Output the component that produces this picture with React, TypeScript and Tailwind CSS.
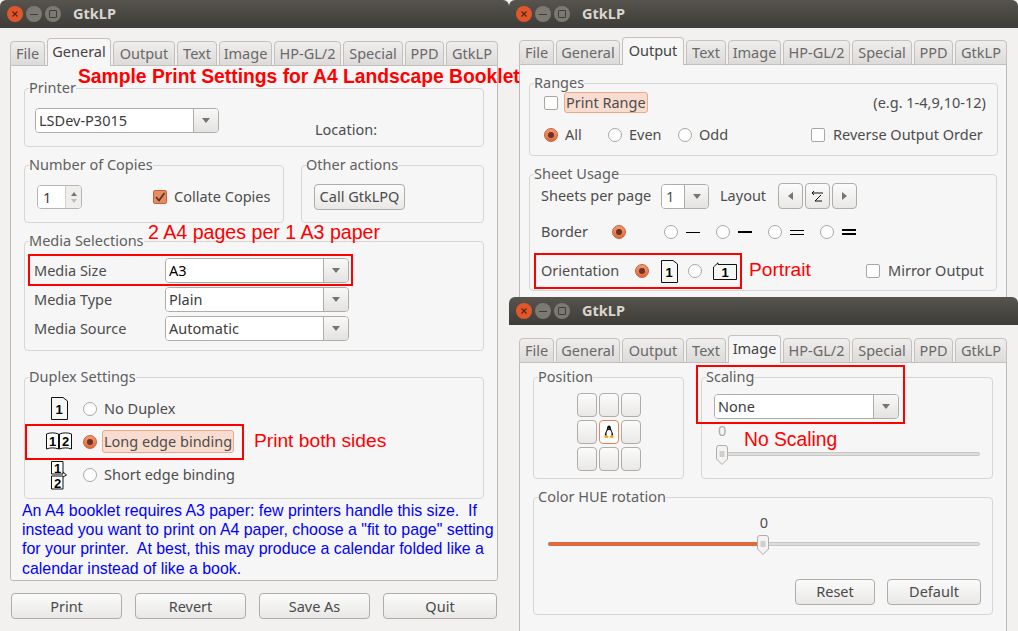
import type { ReactNode } from 'react';

const TAB_WIDTHS: Array<[string, string]> = [
  ['File', 'w-[35px]'],
  ['General', 'w-[64px]'],
  ['Output', 'w-[62px]'],
  ['Text', 'w-[40px]'],
  ['Image', 'w-[53px]'],
  ['HP-GL/2', 'w-[67px]'],
  ['Special', 'w-[60px]'],
  ['PPD', 'w-[39px]'],
  ['GtkLP', 'w-[52px]'],
];

function TitleBar() {
  return <div className="flex h-[28px] items-center rounded-t-[6px] bg-gradient-to-b from-[#57544e] to-[#3d3c37] pl-[7px]">
    <span className="flex h-[16px] w-[16px] items-center justify-center rounded-full bg-[#e2562b]">
      <svg width="8" height="8" viewBox="0 0 8 8"><path d="M1.500 1.500l5 5M6.500 1.500l-5 5" stroke="#5a2413" strokeWidth="1.200" /></svg>
    </span>
    <span className="ml-[3px] flex h-[16px] w-[16px] items-center justify-center rounded-full bg-[#7b7972]">
      <span className="h-[1px] w-[8px] bg-[#3e3c38]" />
    </span>
    <span className="ml-[3px] flex h-[16px] w-[16px] items-center justify-center rounded-full bg-[#7b7972]">
      <span className="h-[8px] w-[8px] rounded-[1px] border border-[#3e3c38]" />
    </span>
    <span className="ml-[12px] text-[14.5px] font-bold text-[#d9d6cf]">GtkLP</span>
  </div>;
}

function Tabs({ active }: { active: string }) {
  return <div className="relative z-10 -mb-[1px] flex h-[28px] items-end gap-[2px]">
    {TAB_WIDTHS.map(([name, width]) => name === active
      ? <div key={name} className={`${width} flex h-[28px] items-center justify-center rounded-t-[4px] border border-b-0 border-[#c4c1bd] bg-[#f6f6f6] pb-[2px] text-[#444]`}>{name}</div>
      : <div key={name} className={`${width} flex h-[25px] items-center justify-center rounded-t-[4px] border border-[#c4c1bd] bg-gradient-to-b from-[#efeeed] to-[#dddbd9] text-[#696969]`}>{name}</div>)}
  </div>;
}

function Group({ title, className, inner, children }: { title: string; className: string; inner?: string; children: ReactNode }) {
  return <fieldset className={`rounded-[4px] border border-[#d8d6d3] ${className}`}>
    <legend className="ml-[4px] text-[14.5px] leading-[20px] text-[#5f5f5f]"><span className="relative -top-[1px]">{title}</span></legend>
    <div className={inner}>{children}</div>
  </fieldset>;
}

function Combo({ value, className, dark }: { value: string; className: string; dark?: boolean }) {
  return <div className={`flex h-[25px] overflow-hidden rounded-[4px] border border-[#b0aca8] ${className}`}>
    <div className={`min-w-0 flex-1 bg-white pl-[3px] leading-[23px] ${dark ? 'text-black' : 'text-[#3c3c3c]'}`}>{value}</div>
    <div className="flex w-[25px] items-center justify-center border-l border-[#b0aca8] bg-gradient-to-b from-[#f8f8f8] to-[#e4e3e1]">
      <span className="h-0 w-0 border-x-[4px] border-t-[5px] border-x-transparent border-t-[#77736e]" />
    </div>
  </div>;
}

function Radio({ on }: { on?: boolean }) {
  return on
    ? <span className="flex h-[14px] w-[14px] shrink-0 items-center justify-center rounded-full border border-[#c9603a] bg-gradient-to-b from-[#f09a75] to-[#e0683c]"><span className="h-[6px] w-[6px] rounded-full bg-[#6b3322]" /></span>
    : <span className="block h-[14px] w-[14px] shrink-0 rounded-full border border-[#aaa7a3] bg-white" />;
}

function Check({ on }: { on?: boolean }) {
  return on
    ? <span className="flex h-[14px] w-[14px] shrink-0 items-center justify-center rounded-[2px] border border-[#c9603a] bg-[#ea8a62]">
      <svg width="12" height="12" viewBox="0 0 12 12"><path d="M2 6l3 3.500L10.500 2" fill="none" stroke="#4d3a30" strokeWidth="1.800" /></svg>
    </span>
    : <span className="block h-[14px] w-[14px] shrink-0 rounded-[2px] border border-[#aaa7a3] bg-white" />;
}

function Button({ className, children }: { className: string; children?: ReactNode }) {
  return <div className={`flex items-center justify-center rounded-[4px] border border-[#b0aca8] bg-gradient-to-b from-[#fbfbfb] to-[#e9e8e6] text-[#4a4a4a] ${className}`}>{children}</div>;
}

function Page({ n, landscape }: { n: string; landscape?: boolean }) {
  return landscape
    ? <svg width="24" height="18" viewBox="0 0 24 18" className="block shrink-0">
      <path d="M.5 5L5 .8V2.500h18.500v15H.5z" fill="#f4f7f4" stroke="#111" />
      <text x="12" y="15" fontSize="13" fontWeight="700" textAnchor="middle" fontFamily="Liberation Sans" fill="#000">{n}</text>
    </svg>
    : <svg width="17" height="23" viewBox="0 0 17 23" className="block shrink-0">
      <path d="M.5 .5H12L16.500 4V22.500H.5z" fill="#f4f7f4" stroke="#111" />
      <text x="8" y="17" fontSize="13" fontWeight="700" textAnchor="middle" fontFamily="Liberation Sans" fill="#000">{n}</text>
    </svg>;
}

function LongBinding() {
  return <svg width="28" height="20" viewBox="0 0 28 20" className="shrink-0">
    <path d="M1.500 17V2C5 .5 10 .5 13.500 2V17C10 15.500 5 15.500 1.500 17zM14.500 17V2C18 .5 23 .5 26.500 2V17C23 15.500 18 15.500 14.500 17z" fill="#fff" stroke="#111" />
    <text x="7.500" y="14" fontSize="13" fontWeight="700" textAnchor="middle" fontFamily="Liberation Sans" fill="#000">1</text>
    <text x="20.500" y="14" fontSize="13" fontWeight="700" textAnchor="middle" fontFamily="Liberation Sans" fill="#000">2</text>
  </svg>;
}

function ShortBinding() {
  return <svg width="18" height="30" viewBox="0 0 18 30" className="shrink-0">
    <path d="M1.500 1.500H13V14H1.500zM1.500 16H13V29H1.500z" fill="#fff" stroke="#111" />
    <path d="M13 12l3.500 3-3.500 2" fill="none" stroke="#111" />
    <text x="7.500" y="12.500" fontSize="13" fontWeight="700" textAnchor="middle" fontFamily="Liberation Sans" fill="#000">1</text>
    <text x="7.500" y="27.500" fontSize="13" fontWeight="700" textAnchor="middle" fontFamily="Liberation Sans" fill="#000">2</text>
  </svg>;
}

function Tux() {
  return <svg width="12" height="14" viewBox="0 0 12 14">
    <path d="M6 .5C4.500 .5 4 2 4 3.500 4 5 2 7 1.800 10L4 12h4l2.200-2C10 7 8 5 8 3.500 8 2 7.500 .5 6 .5z" fill="#111" />
    <ellipse cx="6" cy="8.500" rx="2.500" ry="3.500" fill="#fff" />
    <path d="M1 11l3-1 1 3H2zM11 11l-3-1-1 3h3z" fill="#f2b01e" />
    <path d="M5.200 3.500h1.600L6 4.500z" fill="#f2b01e" />
  </svg>;
}

function Slider({ value, className, fill }: { value: number; className: string; fill?: boolean }) {
  return <div className={`relative h-[20px] ${className}`}>
    <div className="absolute inset-x-0 top-[7px] h-[4px] rounded-full border border-[#c8c6c3] bg-[#dfdedc]" />
    {fill && <div className="absolute left-0 top-[7px] h-[4px] rounded-full bg-[#e0693d]" style={{ width: value + 3 }} />}
    <svg width="12" height="20" viewBox="0 0 12 20" className="absolute top-0" style={{ left: value - 3 }}>
      <path d="M.5 3Q.5 .5 3 .5H9Q11.500 .5 11.500 3V14L6 19.500.5 14z" fill="#f4f3f2" stroke="#b0aca8" />
      <path d="M3.500 7h5M3.500 9h5M3.500 11h5" stroke="#aaa" />
    </svg>
  </div>;
}

function Annotation({ className, children }: { className: string; children: ReactNode }) {
  return <div className={`absolute z-30 whitespace-nowrap font-['Liberation_Sans',sans-serif] text-[#ff0000] ${className}`}>{children}</div>;
}

function GeneralWindow() {
  return <section className="absolute left-0 top-0 z-0 h-[631px] w-[509px] overflow-hidden bg-[#f2f1f0]">
    <TitleBar />
    <div className="pl-[10px] pr-[11px] pt-[10px]">
      <Tabs active="General" />
      <div className="h-[516px] rounded-b-[3px] border border-[#bdbab6] bg-[#f6f6f6] px-[13px] pt-[12px]">
        <Group title="Printer" className="h-[69px]" inner="pl-[10px] pt-[10px]">
          <div className="flex items-start">
            <Combo value="LSDev-P3015" className="w-[184px]" />
            <span className="ml-[96px] mt-[11px] text-[#4d4d4d]">Location:</span>
          </div>
        </Group>
        <div className="mt-[8px] flex gap-[17px]">
          <Group title="Number of Copies" className="h-[68px] w-[260px]" inner="pl-[12px] pt-[10px]">
            <div className="flex items-center">
              <div className="flex h-[24px] w-[45px] overflow-hidden rounded-[4px] border border-[#b8b5b1]">
                <div className="flex-1 bg-white pl-[5px] leading-[22px] text-[#3c3c3c]">1</div>
                <div className="flex w-[16px] flex-col items-center justify-center gap-[3px] border-l border-[#d2d0cd] bg-[#efeeed]">
                  <span className="h-0 w-0 border-x-[3px] border-b-[4px] border-x-transparent border-b-[#77736e]" />
                  <span className="h-0 w-0 border-x-[3px] border-t-[4px] border-x-transparent border-t-[#c0bdb9]" />
                </div>
              </div>
              <span className="ml-[71px]"><Check on /></span>
              <span className="ml-[7px] text-[#4d4d4d]">Collate Copies</span>
            </div>
          </Group>
          <Group title="Other actions" className="h-[68px] w-[183px]" inner="pl-[12px] pt-[9px]">
            <Button className="h-[26px] w-[91px] text-[#3c3c3c]">Call GtkLPQ</Button>
          </Group>
        </div>
        <Group title="Media Selections" className="mt-[8px] h-[120px]" inner="pl-[9px] pt-[7px]">
          <div className="flex flex-col gap-[4px]">
            {[['Media Size', 'A3'], ['Media Type', 'Plain'], ['Media Source', 'Automatic']].map(([label, value]) => <div key={label} className="flex items-center">
              <span className="w-[131px] text-[#4d4d4d]">{label}</span>
              <Combo value={value} dark={value === 'A3'} className="w-[184px]" />
            </div>)}
          </div>
        </Group>
        <Group title="Duplex Settings" className="mt-[16px] h-[132px]" inner="pl-[10px] pt-[5px]">
          <div className="flex h-[33px] items-center">
            <span className="flex w-[48px] justify-center"><Page n="1" /></span>
            <Radio />
            <span className="ml-[7px] text-[#4d4d4d]">No Duplex</span>
          </div>
          <div className="flex h-[33px] items-center">
            <span className="flex w-[48px] justify-center"><LongBinding /></span>
            <Radio on />
            <span className="ml-[5px] rounded-[3px] border border-[#f0a688] bg-[#f8dccf] px-[1px] text-[#4d4d4d]">Long edge binding</span>
          </div>
          <div className="flex h-[33px] items-center">
            <span className="flex w-[48px] justify-center"><ShortBinding /></span>
            <Radio />
            <span className="ml-[7px] text-[#4d4d4d]">Short edge binding</span>
          </div>
        </Group>
        <p className="-ml-[2px] mt-[2px] whitespace-pre font-['Liberation_Sans',sans-serif] text-[15.9px] leading-[19.2px] text-[#0000ff]">{'An A4 booklet requires A3 paper: few printers handle this size.  If\ninstead you want to print on A4 paper, choose a "fit to page" setting\nfor your printer.  At best, this may produce a calendar folded like a\ncalendar instead of like a book.'}</p>
      </div>
      <div className="ml-[1px] mt-[12px] flex gap-[13px]">
        <Button className="h-[26px] w-[111px] pt-[1px]">Print</Button>
        <Button className="h-[26px] w-[111px] pt-[1px]">Revert</Button>
        <Button className="h-[26px] w-[111px] pt-[1px]">Save As</Button>
        <Button className="h-[26px] w-[114px] pt-[1px]">Quit</Button>
      </div>
    </div>
  </section>;
}

function OutputWindow() {
  return <section className="absolute left-[509px] top-0 z-10 h-[297px] w-[509px] overflow-hidden bg-[#f2f1f0]">
    <TitleBar />
    <div className="pl-[10px] pr-[11px] pt-[9px]">
      <Tabs active="Output" />
      <div className="h-[300px] border border-[#bdbab6] bg-[#f6f6f6] px-[9px] pt-[8px]">
        <Group title="Ranges" className="h-[83px]" inner="px-[14px]">
          <div className="-mt-[1px] flex h-[21px] items-center">
            <Check />
            <span className="ml-[6px] rounded-[3px] border border-[#f0a688] bg-[#f8dccf] px-[1px] leading-[19px] text-[#4d4d4d]">Print Range</span>
            <span className="ml-auto mr-[-3px] whitespace-nowrap text-[#4d4d4d]">(e.g. 1-4,9,10-12)</span>
          </div>
          <div className="mt-[12px] flex h-[20px] items-center whitespace-nowrap text-[#4d4d4d]">
            <span className="flex w-[64px] items-center gap-[7px]"><Radio on />All</span>
            <span className="flex w-[70px] items-center gap-[7px]"><Radio />Even</span>
            <span className="flex w-[133px] items-center gap-[7px]"><Radio />Odd</span>
            <span className="flex items-center gap-[8px]"><Check />Reverse Output Order</span>
          </div>
        </Group>
        <Group title="Sheet Usage" className="mt-[8px] h-[127px]" inner="pl-[11px]">
          <div className="-mt-[1px] flex h-[26px] items-center text-[#4d4d4d]">
            <span className="w-[120px]">Sheets per page</span>
            <div className="flex h-[25px] w-[48px] overflow-hidden rounded-[4px] border border-[#b0aca8]">
              <div className="w-[22px] bg-white pl-[4px] leading-[23px]">1</div>
              <div className="flex flex-1 items-center justify-center border-l border-[#b0aca8] bg-gradient-to-b from-[#f8f8f8] to-[#e4e3e1]">
                <span className="h-0 w-0 border-x-[4px] border-t-[5px] border-x-transparent border-t-[#77736e]" />
              </div>
            </div>
            <span className="ml-[11px] w-[58px]">Layout</span>
            <div className="flex gap-[2px]">
              <Button className="h-[26px] w-[25px]"><span className="h-0 w-0 border-y-[4px] border-r-[5px] border-y-transparent border-r-[#77736e]" /></Button>
              <Button className="h-[26px] w-[25px]">
                <svg width="13" height="13" viewBox="0 0 13 13"><path d="M1 3h11M1 3l2-2M1 3l2 2M10 5L4 11h7" fill="none" stroke="#111" /></svg>
              </Button>
              <Button className="h-[26px] w-[25px]"><span className="h-0 w-0 border-y-[4px] border-l-[5px] border-y-transparent border-l-[#77736e]" /></Button>
            </div>
          </div>
          <div className="mt-[13px] flex h-[20px] items-center text-[#4d4d4d]">
            <span className="w-[71px]">Border</span>
            <span className="w-[52px]"><Radio on /></span>
            <span className="flex w-[52px] items-center gap-[8px]"><Radio /><span className="h-[1px] w-[14px] bg-black" /></span>
            <span className="flex w-[52px] items-center gap-[8px]"><Radio /><span className="h-[2px] w-[14px] bg-black" /></span>
            <span className="flex w-[52px] items-center gap-[8px]"><Radio /><span className="h-[5px] w-[14px] border-y border-black" /></span>
            <span className="flex w-[52px] items-center gap-[8px]"><Radio /><span className="h-[6px] w-[14px] border-y-2 border-black" /></span>
          </div>
          <div className="mt-[19px] flex h-[20px] items-center whitespace-nowrap text-[#4d4d4d]">
            <span className="w-[94px]">Orientation</span>
            <Radio on />
            <span className="ml-[12px]"><Page n="1" /></span>
            <span className="ml-[10px]"><Radio /></span>
            <span className="ml-[11px]"><Page n="1" landscape /></span>
            <span className="ml-[129px] flex items-center gap-[8px]"><Check />Mirror Output</span>
          </div>
        </Group>
      </div>
    </div>
  </section>;
}

function ImageWindow() {
  return <section className="absolute left-[509px] top-[297px] z-20 h-[334px] w-[509px] overflow-hidden bg-[#f2f1f0]">
    <TitleBar />
    <div className="pl-[10px] pr-[11px] pt-[10px]">
      <Tabs active="Image" />
      <div className="h-[300px] border border-[#bdbab6] bg-[#f6f6f6] pl-[13px] pt-[4px]">
        <div className="flex gap-[17px]">
          <Group title="Position" className="h-[112px] w-[151px]" inner="pl-[43px] pt-[6px]">
            <div className="grid w-[64px] grid-cols-3 gap-x-[2px] gap-y-[3px]">
              {[0, 1, 2, 3, 4, 5, 6, 7, 8].map((cell) => cell === 4
                ? <div key={cell} className="flex h-[24px] items-center justify-center rounded-[4px] border border-[#e8835c] bg-white"><Tux /></div>
                : <Button key={cell} className="h-[24px]" />)}
            </div>
          </Group>
          <Group title="Scaling" className="h-[112px] w-[292px]" inner="pl-[12px] pt-[7px]">
            <Combo value="None" className="w-[185px]" />
            <div className="ml-[4px] mt-[1px] h-[20px] leading-[20px] text-[#a9a9a9]">0</div>
            <Slider value={3} className="ml-[2px] mt-[5px] w-[264px]" />
          </Group>
        </div>
        <Group title="Color HUE rotation" className="mt-[8px] h-[128px] w-[460px]" inner="pl-[14px] pr-[11px]">
          <div className="mt-[5px] h-[20px] w-[432px] text-center leading-[20px] text-[#4d4d4d]">0</div>
          <Slider value={212} fill className="mt-[3px] w-[432px]" />
          <div className="mt-[24px] flex justify-end gap-[12px]">
            <Button className="h-[26px] w-[80px]">Reset</Button>
            <Button className="h-[26px] w-[94px]">Default</Button>
          </div>
        </Group>
      </div>
    </div>
  </section>;
}

export default function App() {
  return <div className="relative h-[631px] w-[1018px] overflow-hidden bg-white font-['Noto_Sans',sans-serif] text-[14.5px]">
    <GeneralWindow />
    <OutputWindow />
    <ImageWindow />

    <Annotation className="left-[78px] top-[66px] text-[19.3px] font-bold leading-[22px]">Sample Print Settings for A4 Landscape Booklet</Annotation>
    <Annotation className="left-[148px] top-[221px] text-[19.6px] leading-[22px]">2 A4 pages per 1 A3 paper</Annotation>
    <Annotation className="left-[254px] top-[430px] text-[19.2px] leading-[22px]">Print both sides</Annotation>
    <Annotation className="left-[749px] top-[259px] text-[19.2px] leading-[22px]">Portrait</Annotation>
    <Annotation className="left-[744px] top-[429px] text-[19.3px] leading-[22px]">No Scaling</Annotation>

    <div className="absolute left-[28px] top-[254px] z-30 h-[32px] w-[325px] border-[2.500px] border-[#ff0000]" />
    <div className="absolute left-[25px] top-[424px] z-30 h-[36px] w-[219px] border-[2.500px] border-[#ff0000]" />
    <div className="absolute left-[534px] top-[253px] z-30 h-[36px] w-[208px] border-[2.500px] border-[#ff0000]" />
    <div className="absolute left-[696px] top-[365px] z-30 h-[59px] w-[209px] border-[2.500px] border-[#ff0000]" />
  </div>;
}
